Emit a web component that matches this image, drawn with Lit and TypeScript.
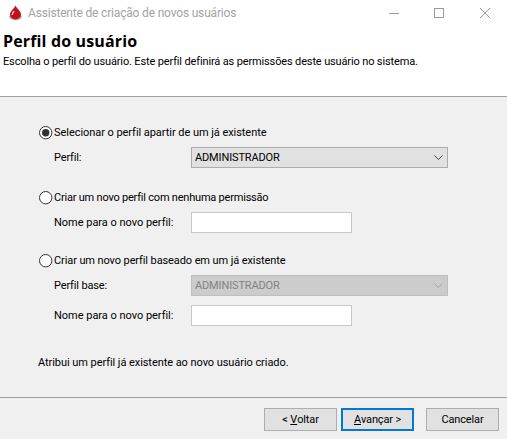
import { LitElement, html, css, svg } from "lit";
import { customElement } from "lit/decorators.js";

const chevron = svg`<svg class="chev" width="9" height="5" viewBox="0 0 9 5"><path d="M0.5 0.5 L4.5 4.5 L8.5 0.5" fill="none" stroke="currentColor" stroke-width="1"/></svg>`;

@customElement("app-root")
export class AppRoot extends LitElement {
  static styles = css`
    :host {
      display: block;
      width: 507px;
      height: 439px;
      overflow: hidden;
      font-family: "Roboto", "Noto Sans", sans-serif;
      font-size: 11px;
      letter-spacing: -0.14px;
      color: #000;
      background: #f0f0f0;
    }
    .win { display: flex; flex-direction: column; height: 439px; }
    .titlebar {
      height: 28px;
      box-sizing: border-box;
      padding: 0 0 3px 7px;
      background: #fff;
      display: flex;
      align-items: center;
      gap: 5px;
      color: #a3a3a3;
    }
    .titlebar .name { flex: 1; font-size: 12px; letter-spacing: -0.18px; }
    .controls { display: flex; align-items: center; }
    .controls svg { display: block; width: 46px; height: 24px; }
    .head {
      background: #fff;
      height: 68px;
      border-bottom: 1px solid #a0a0a0;
      padding-left: 3px;
    }
    h1 {
      margin: 3px 0 0;
      font-family: "Open Sans", sans-serif;
      font-size: 16px;
      line-height: 21px;
      font-weight: 700;
      letter-spacing: 0.15px;
    }
    .sub { line-height: 16px; margin-top: 2px; }
    .body { flex: 1; padding: 27px 0 0 38px; display: flex; flex-direction: column; }
    .opt { display: flex; align-items: center; gap: 1px; height: 16px; }
    .opt svg { display: block; flex: none; }
    .row {
      display: grid;
      grid-template-columns: 137px auto;
      align-items: center;
      padding-left: 16px;
      height: 21px;
    }
    .select {
      width: 257px;
      height: 21px;
      box-sizing: border-box;
      background: #e1e1e1;
      border: 1px solid #adadad;
      display: flex;
      align-items: center;
      justify-content: space-between;
      padding: 0 4px 0 3px;
      color: #000;
    }
    .select .chev { color: #444; }
    .select.off { background: #cccccc; border-color: #bfbfbf; color: #838383; }
    .select.off .chev { color: #a8a8a8; }
    .input {
      width: 161px;
      height: 21px;
      box-sizing: border-box;
      background: #fff;
      border: 1px solid #c8c8c8;
    }
    .g1 { margin-top: 7px; }
    .opt1 { letter-spacing: -0.05px; }
    .opt2 { margin-top: 21px; letter-spacing: -0.21px; }
    .g2 { margin-top: 7px; }
    .opt3 { margin-top: 19px; letter-spacing: -0.1px; }
    .g3 { margin-top: 7px; }
    .g4 { margin-top: 9px; }
    .name-label { letter-spacing: -0.02px; }
    .note { margin: 29px 0 0 0; line-height: 16px; height: 16px; letter-spacing: -0.06px; }
    .foot {
      height: 42px;
      box-sizing: border-box;
      border-top: 1px solid #a0a0a0;
      display: flex;
      justify-content: flex-end;
      align-items: flex-start;
      padding: 10px 8px 0 0;
    }
    .btn {
      width: 73px;
      height: 23px;
      box-sizing: border-box;
      background: #e1e1e1;
      border: 1px solid #adadad;
      display: flex;
      align-items: center;
      justify-content: center;
      font: inherit;
      letter-spacing: inherit;
      color: #000;
      padding: 0;
    }
    .btn.def { border: 2px solid #0078d7; margin: 0 12px 0 4px; }
    .btn u { text-underline-offset: 1px; }
  `;

  private radio(on: boolean) {
    return html`<svg width="15" height="15" viewBox="0 0 15 15">
      <circle cx="7.7" cy="7.7" r="6.2" fill="#fff" stroke="#333" stroke-width="1"/>
      ${on ? svg`<circle cx="7.7" cy="7.7" r="3.7" fill="#333"/>` : ""}
    </svg>`;
  }

  render() {
    return html`
      <div class="win">
        <div class="titlebar">
          <svg width="16" height="16" viewBox="0 0 16 16">
            <ellipse cx="8.5" cy="12" rx="6.5" ry="3.2" fill="#b5b5b5"/>
            <path d="M8.5 0.5 C9.6 3.4 14 6.2 14 9.4 A5.5 5 0 0 1 3 9.4 C3 6.2 7.4 3.4 8.5 0.5 Z" fill="#c4101c"/>
            <path d="M5.2 10 C5.2 8.2 6.2 7 7.2 6.2" fill="none" stroke="#fbdcdc" stroke-width="1.3"/>
          </svg>
          <span class="name">Assistente de criação de novos usuários</span>
          <div class="controls">
            <svg viewBox="0 0 46 24"><path d="M20 12.5 H30" stroke="#9a9a9a" fill="none"/></svg>
            <svg viewBox="0 0 46 24"><rect x="19.5" y="7.5" width="9" height="9" stroke="#9a9a9a" fill="none"/></svg>
            <svg viewBox="0 0 46 24"><path d="M19 7 L29 17 M29 7 L19 17" stroke="#9a9a9a" fill="none"/></svg>
          </div>
        </div>
        <div class="head">
          <h1>Perfil do usuário</h1>
          <div class="sub">Escolha o perfil do usuário. Este perfil definirá as permissões deste usuário no sistema.</div>
        </div>
        <div class="body">
          <div class="opt opt1">${this.radio(true)}<span>Selecionar o perfil apartir de um já existente</span></div>
          <div class="row g1"><span>Perfil:</span>
            <div class="select"><span>ADMINISTRADOR</span>${chevron}</div></div>
          <div class="opt opt2">${this.radio(false)}<span>Criar um novo perfil com nenhuma permissão</span></div>
          <div class="row g2"><span class="name-label">Nome para o novo perfil:</span><div class="input"></div></div>
          <div class="opt opt3">${this.radio(false)}<span>Criar um novo perfil baseado em um já existente</span></div>
          <div class="row g3"><span>Perfil base:</span>
            <div class="select off"><span>ADMINISTRADOR</span>${chevron}</div></div>
          <div class="row g4"><span class="name-label">Nome para o novo perfil:</span><div class="input"></div></div>
          <div class="note">Atribui um perfil já existente ao novo usuário criado.</div>
        </div>
        <div class="foot">
          <button class="btn">&lt;&nbsp;<u>V</u>oltar</button>
          <button class="btn def"><u>A</u>vançar &gt;</button>
          <button class="btn">Cancelar</button>
        </div>
      </div>
    `;
  }
}
